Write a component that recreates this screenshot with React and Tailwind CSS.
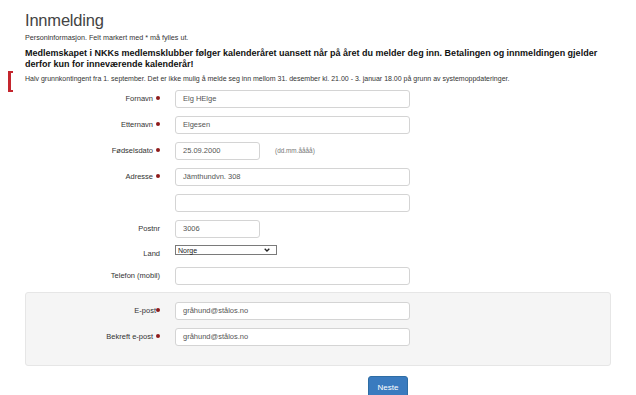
import React from "react";

function Dot() {
  return <span className="inline-block ml-[3px] w-[4px] h-[4px] rounded-full bg-[#8e1b1b] align-middle relative -top-[1px]" />;
}

function Field({ label, required, value, width = "w-[235px]", labelWidth = "w-[135px]", extra, dotGap = true, className = "" }) {
  return (
    <div className={`flex items-center ${className}`}>
      <div className={`${labelWidth} shrink-0 text-right text-[7.5px] text-[#333]`}>
        {label}
        {required && (dotGap ? <Dot /> : <span className="inline-block w-[4px] h-[4px] rounded-full bg-[#8e1b1b] align-middle relative -top-[1px]" />)}
      </div>
      <div
        className={`ml-[15px] ${width} h-[18px] shrink-0 border border-[#d4d4d4] rounded-[3px] bg-white px-[7px] flex items-center text-[7.5px] text-[#555]`}
      >
        {value}
      </div>
      {extra}
    </div>
  );
}

export default function App() {
  return (
    <div className="w-[636px] h-[395px] overflow-hidden bg-white font-['Liberation_Sans',Arial,sans-serif] text-[#333] px-[25px] relative">
      <h1 className="pt-[9px] text-[16.5px] leading-[22px] font-normal tracking-[-0.2px] text-[#444]">Innmelding</h1>
      <p className="mt-[2px] text-[7.2px] leading-[10px] text-[#333]">
        Personinformasjon. Felt markert med * må fylles ut.
      </p>
      <p className="mt-[5px] text-[9px] leading-[11px] font-bold text-[#111]">
        Medlemskapet i NKKs medlemsklubber følger kalenderåret uansett når på året du melder deg inn. Betalingen og innmeldingen gjelder derfor kun for inneværende kalenderår!
      </p>
      <div className="mt-[4px]">
        <span className="absolute left-[8px] top-[71px] w-[5px] h-[21px] border-l-[3px] border-t-[2px] border-b-[2px] border-[#c4262e]" />
        <p className="text-[7px] leading-[10px] text-[#333]">
          Halv grunnkontingent fra 1. september. Det er ikke mulig å melde seg inn mellom 31. desember kl. 21.00 - 3. januar 18.00 på grunn av systemoppdateringer.
        </p>
      </div>

      <div className="mt-[6px]">
        <Field label="Fornavn" required value="Elg HElge" />
        <Field className="mt-[8px]" label="Etternavn" required value="Elgesen" />
        <Field
          className="mt-[8px]"
          label="Fødselsdato"
          required
          value="25.09.2000"
          width="w-[85px]"
          extra={<span className="ml-[15px] text-[6.4px] text-[#777]">(dd.mm.åååå)</span>}
        />
        <Field className="mt-[8px]" label="Adresse" required value="Jämthundvn. 308" />
        <Field className="mt-[8px]" label="" value="" />
        <Field className="mt-[8px]" label="Postnr" value="3006" width="w-[85px]" />

        <div className="mt-[7px] flex items-start h-[10px]">
          <div className="w-[135px] shrink-0 text-right text-[7.5px] text-[#333] mt-[4px] leading-[10px]">Land</div>
          <div className="ml-[15px] w-[102px] h-[10px] border border-[#7a7a7a] bg-white flex items-center justify-between pl-[2px] pr-[6px] text-[7px] text-[#222] leading-none">
            <span>Norge</span>
            <svg width="6" height="4" viewBox="0 0 6 4">
              <path d="M0.7 0.7 L3 3 L5.3 0.7" fill="none" stroke="#222" strokeWidth="1.3" />
            </svg>
          </div>
        </div>

        <Field className="mt-[12px]" label="Telefon (mobil)" value="" />

        <div className="mt-[7px] w-[586px] border border-[#e6e6e6] rounded-[3px] bg-[#f5f5f5] pt-[9px] pb-[19px]">
          <Field labelWidth="w-[134px]" label="E-post" required dotGap={false} value="gråhund@stålos.no" />
          <Field className="mt-[8px]" labelWidth="w-[134px]" label="Bekreft e-post" required value="gråhund@stålos.no" />
        </div>

        <div className="mt-[10px] flex">
          <button className="ml-[343px] w-[40px] h-[24px] rounded-[3px] bg-[#3a7bbf] border border-[#2e6da4] text-white text-[8px] flex items-center justify-center">
            Neste
          </button>
        </div>
      </div>
    </div>
  );
}
